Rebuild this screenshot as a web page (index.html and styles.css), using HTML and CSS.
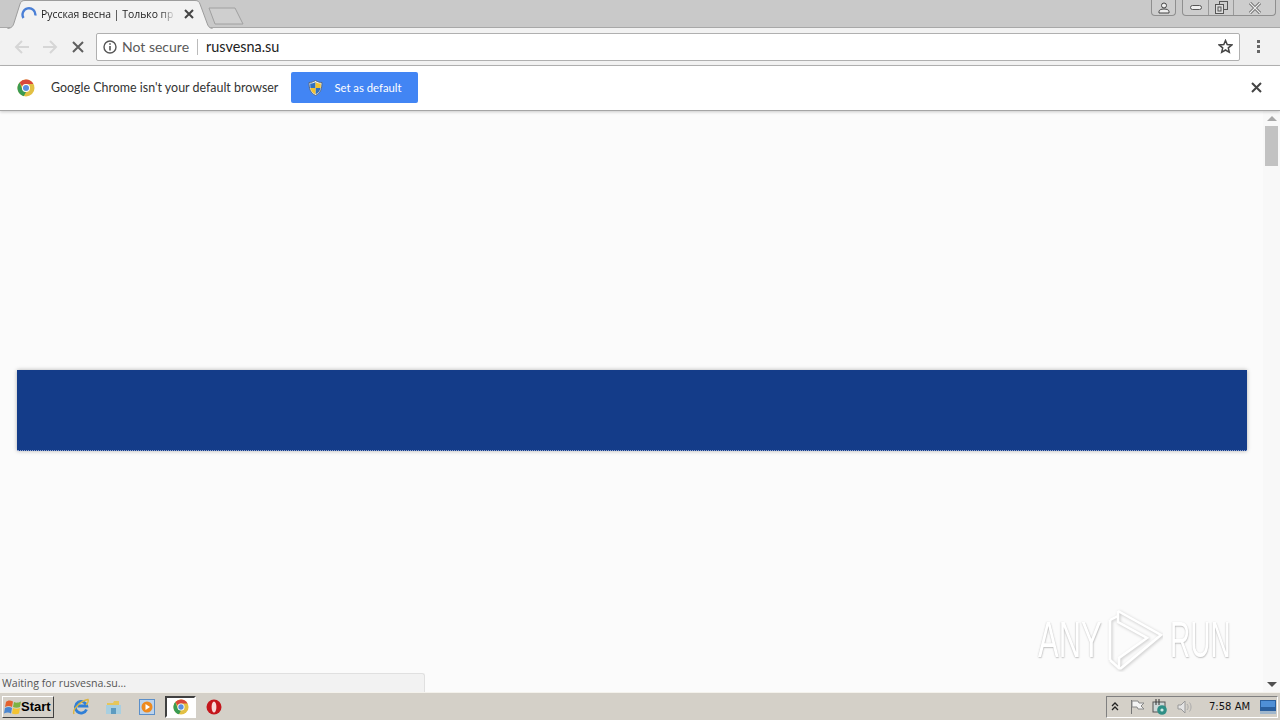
FILE: index.html
```html
<!DOCTYPE html>
<html lang="en">
<head>
  <meta charset="UTF-8">
  <title>Русская весна | Только правда</title>
  <link rel="stylesheet" href="styles.css">
</head>
<body>
  <!-- tab strip -->
  <div class="tab-strip">
    <div class="tab">
      <svg class="tab-shape" width="206" height="29" viewBox="0 0 206 29"><path d="M0.5 28.5 C5 28 6 26 7 23 L13 4 C14 1.5 15 0.5 18 0.5 H188 C191 0.5 192 1.5 193 4 L200 23 C201 26 202 28 205.5 28.5" fill="#f2f2f2" stroke="#9c9c9c"/></svg>
      <svg class="tab-spinner" width="16" height="16" viewBox="0 0 16 16"><path d="M2.5 12 A6.4 6.4 0 1 1 14.3 9.5" fill="none" stroke="#4a7fd6" stroke-width="2.4"/></svg>
      <span class="tab-title">Русская весна | Только пр</span>
      <svg class="tab-close" width="10" height="10" viewBox="0 0 10 10"><path d="M1 1 L9 9 M9 1 L1 9" stroke="#444" stroke-width="2"/></svg>
    </div>
    <svg class="new-tab" width="36" height="18" viewBox="0 0 36 18"><path d="M1 1 H27 L35 17 H7 Z" fill="#cfcfcf" stroke="#a0a0a0"/></svg>
    <div class="window-btns">
      <div class="win-group profile-btn">
        <svg width="12" height="12" viewBox="0 0 12 12"><circle cx="6" cy="3.5" r="2.5" fill="#eee" stroke="#444"/><path d="M1 11 V9.5 C1 8 3 7 6 7 C9 7 11 8 11 9.5 V11 Z" fill="#eee" stroke="#444"/></svg>
      </div>
      <div class="win-group">
        <div class="win-btn min-btn"><svg width="12" height="6" viewBox="0 0 12 6"><rect x="0.5" y="0.5" width="11" height="4" rx="2" fill="#eee" stroke="#555"/></svg></div>
        <div class="win-btn max-btn"><svg width="13" height="13" viewBox="0 0 13 13"><rect x="4.5" y="0.5" width="8" height="8" fill="none" stroke="#555"/><rect x="0.5" y="3.5" width="8" height="9" fill="#ddd" stroke="#555"/><rect x="3" y="6" width="3" height="4" fill="none" stroke="#555"/></svg></div>
        <div class="win-btn close-btn"><svg width="14" height="12" viewBox="0 0 14 12"><path d="M2 1 L12 11 M12 1 L2 11" stroke="#666" stroke-width="3"/><path d="M2 1 L12 11 M12 1 L2 11" stroke="#eee" stroke-width="1.2"/></svg></div>
      </div>
    </div>
  </div>

  <!-- toolbar -->
  <div class="toolbar">
    <svg class="nav-icon" width="16" height="14" viewBox="0 0 16 14"><path d="M15 7 H2 M8 1 L2 7 L8 13" fill="none" stroke="#d6d6d6" stroke-width="2"/></svg>
    <svg class="nav-icon" width="16" height="14" viewBox="0 0 16 14"><path d="M1 7 H14 M8 1 L14 7 L8 13" fill="none" stroke="#d6d6d6" stroke-width="2"/></svg>
    <svg class="nav-icon stop-icon" width="12" height="12" viewBox="0 0 12 12"><path d="M1 1 L11 11 M11 1 L1 11" stroke="#5f5f5f" stroke-width="2"/></svg>
    <div class="omnibox">
      <svg class="info-icon" width="14" height="14" viewBox="0 0 14 14"><circle cx="7" cy="7" r="6" fill="none" stroke="#555" stroke-width="1.4"/><path d="M7 6 V10.5 M7 3.2 V4.8" stroke="#555" stroke-width="1.6"/></svg>
      <span class="not-secure">Not secure</span>
      <span class="omni-sep"></span>
      <span class="url">rusvesna.su</span>
      <svg class="star-icon" width="15" height="15" viewBox="0 0 15 15"><path d="M7.5 1.5 L9.2 5.6 L13.7 6 L10.3 8.9 L11.3 13.3 L7.5 11 L3.7 13.3 L4.7 8.9 L1.3 6 L5.8 5.6 Z" fill="none" stroke="#444" stroke-width="1.5"/></svg>
    </div>
    <div class="menu-dots"><i></i><i></i><i></i></div>
  </div>

  <!-- default browser bar -->
  <div class="infobar">
    <svg class="chrome-logo" width="18" height="18" viewBox="0 0 18 18">
      <circle cx="9" cy="9" r="8.5" fill="#e2c044"/>
      <path d="M9 .5 A8.5 8.5 0 0 1 16.4 5 H9 A4 4 0 0 0 5.3 7.4 L2.6 3.4 A8.5 8.5 0 0 1 9 .5 Z" fill="#d9483b"/>
      <path d="M2.6 3.4 L5.4 10.8 A4 4 0 0 0 9 13 L6.7 17.2 A8.5 8.5 0 0 1 2.6 3.4 Z" fill="#3a9b52"/>
      <circle cx="9" cy="9" r="4" fill="#fff"/><circle cx="9" cy="9" r="3" fill="#5a8fe0"/>
    </svg>
    <span class="infobar-text">Google Chrome isn't your default browser</span>
    <div class="default-btn">
      <svg width="15" height="16" viewBox="0 0 15 16"><path d="M7.5 .5 C10 2 12 2.5 14 2.5 C14 9 12.5 13 7.5 15.5 C2.5 13 1 9 1 2.5 C3 2.5 5 2 7.5 .5 Z" fill="#e9eef5" stroke="#5a6a80"/><path d="M7.5 2 V8 H2.4 C2.3 6 2.2 5 2.2 3.6 C4 3.5 6 3 7.5 2 Z" fill="#2f6fc0"/><path d="M7.5 8 H12.6 C12 11 10.5 13 7.5 14.3 Z" fill="#2f6fc0"/><path d="M7.5 2 C9 3 11 3.5 12.8 3.6 C12.8 5 12.7 6.5 12.6 8 H7.5 Z" fill="#f2c230"/><path d="M2.4 8 H7.5 V14.3 C4.5 13 3 11 2.4 8 Z" fill="#f2c230"/></svg>
      <span>Set as default</span>
    </div>
    <svg class="infobar-close" width="11" height="11" viewBox="0 0 11 11"><path d="M1 1 L10 10 M10 1 L1 10" stroke="#444" stroke-width="2"/></svg>
  </div>

  <!-- page area -->
  <div class="viewport">
    <div class="page">
      <div class="blue-band"></div>
    </div>
    <div class="scrollbar">
      <div class="arrow-up"></div>
      <div class="thumb"></div>
      <div class="scroll-rest"></div>
      <div class="arrow-down"></div>
    </div>
    <div class="status-bubble">Waiting for rusvesna.su...</div>
    <div class="watermark">
      <span class="wm-any">ANY</span>
      <svg width="60" height="64" viewBox="0 0 60 64">
        <g fill="none" stroke="#fff" stroke-width="2.5" class="wm-logo">
          <path d="M15 3 L58 27 L17 61"/>
          <path d="M15 3 V14 L44 30 L16 50 V61"/>
          <path d="M7 12 V52"/>
          <path d="M7 52 L17 61"/>
          <path d="M7 12 L15 8"/>
        </g>
      </svg>
      <span class="wm-run">RUN</span>
    </div>
  </div>

  <!-- taskbar -->
  <div class="taskbar">
    <div class="start-btn">
      <svg width="17" height="16" viewBox="0 0 17 16"><path d="M2 3 C4 1 6 1 9 2.5 L8 8 C6 6.5 3.5 6.5 1 8 Z" fill="#e4622e"/><path d="M10 3 C12 4 14 4 17 2.5 L16 8 C14 9 11 9 9 8 Z" fill="#7cb342"/><path d="M1 9 C3.5 7.5 6 7.5 8 9 L7 14.5 C5 13 2.5 13 0 14.5 Z" fill="#4a86d0"/><path d="M9 9 C11 10 14 10 16 9 L15 14.5 C13 15.5 10 15.5 8 14.5 Z" fill="#f3c332"/></svg>
      <span>Start</span>
    </div>
    <div class="quick-launch">
      <div class="task-icon">
        <svg width="18" height="18" viewBox="0 0 18 18"><path d="M14.5 11.5 A5.8 5.8 0 1 1 14.8 8 H5.5" fill="none" stroke="#2f7fd6" stroke-width="2.8"/><path d="M2 16 C0 12 8 3 16 1.5 C17 4 15 6 14 7" fill="none" stroke="#dcb540" stroke-width="1.4"/></svg>
      </div>
      <div class="task-icon">
        <svg width="18" height="18" viewBox="0 0 18 18"><path d="M2 5 H8 L9 3 H14 V7 H2 Z" fill="#e6c65a"/><path d="M1 7 H16 V16 H1 Z" fill="#a8cfe0"/><path d="M6 10 H11 V16 H6 Z" fill="#5d9bc0"/></svg>
      </div>
      <div class="task-icon">
        <svg width="18" height="18" viewBox="0 0 18 18"><rect x="1.5" y="1.5" width="15" height="15" fill="#bcd3ec" stroke="#5b8fc9"/><circle cx="9" cy="9" r="5.5" fill="#ee8a1e"/><path d="M7.5 6 L12 9 L7.5 12 Z" fill="#fff"/></svg>
      </div>
      <div class="task-icon active">
        <svg width="16" height="16" viewBox="0 0 18 18">
          <circle cx="9" cy="9" r="8.5" fill="#e2c044"/>
          <path d="M9 .5 A8.5 8.5 0 0 1 16.4 5 H9 A4 4 0 0 0 5.3 7.4 L2.6 3.4 A8.5 8.5 0 0 1 9 .5 Z" fill="#d9483b"/>
          <path d="M2.6 3.4 L5.4 10.8 A4 4 0 0 0 9 13 L6.7 17.2 A8.5 8.5 0 0 1 2.6 3.4 Z" fill="#3a9b52"/>
          <circle cx="9" cy="9" r="4" fill="#fff"/><circle cx="9" cy="9" r="3" fill="#5a8fe0"/>
        </svg>
      </div>
      <div class="task-icon opera-icon">
        <svg width="16" height="16" viewBox="0 0 16 16"><circle cx="8" cy="8" r="7.5" fill="#c4161c"/><ellipse cx="8" cy="8" rx="2.4" ry="5.5" fill="#f8dada"/></svg>
      </div>
    </div>
    <div class="tray">
      <svg class="tray-arrows" width="8" height="9" viewBox="0 0 8 9"><path d="M1 4 L4 1 L7 4 M1 8 L4 5 L7 8" fill="none" stroke="#222" stroke-width="1.3"/></svg>
      <svg class="tray-flag" width="16" height="16" viewBox="0 0 16 16"><path d="M2.5 1 V15" stroke="#777"/><path d="M3 2 H9 L10 4 H15 L12 7 L15 10 H9 L8 8 H3 Z" fill="#f4f4f4" stroke="#888"/></svg>
      <svg class="tray-net" width="16" height="16" viewBox="0 0 16 16"><rect x="1" y="3" width="12" height="10" fill="#cfd8d8" stroke="#555"/><path d="M4 0 V6 M7 0 V6" stroke="#333"/><circle cx="10" cy="11" r="4.8" fill="#2f8f86"/><circle cx="10" cy="11" r="1.6" fill="#cdebe6"/></svg>
      <svg class="tray-sound" width="16" height="14" viewBox="0 0 16 14"><path d="M1 5 H4 L8 1 V13 L4 9 H1 Z" fill="#e4e4e4" stroke="#999"/><path d="M10 4 C11.5 6 11.5 8 10 10 M12.5 2.5 C14.5 5 14.5 9 12.5 11.5" fill="none" stroke="#aaa"/></svg>
      <span class="clock">7:58 AM</span>
      <svg class="show-desktop" width="16" height="14" viewBox="0 0 16 14"><rect width="16" height="11" fill="#2a5f9e"/><rect x="1" y="1" width="14" height="6" fill="#4f8fd6"/><rect y="11" width="16" height="3" fill="#9fb6cc"/></svg>
    </div>
  </div>
</body>
</html>
```

FILE: styles.css
```css
* {
  box-sizing: border-box;
  margin: 0;
  padding: 0;
}
html, body {
  height: 100%;
  overflow: hidden;
}
body {
  display: flex;
  flex-direction: column;
  font-family: Lato, "Open Sans", sans-serif;
  background-color: #fbfbfb;
  color: #333;
}

/* tab strip */
.tab-strip {
  height: 28px;
  flex-shrink: 0;
  display: flex;
  align-items: flex-start;
  padding-left: 7px;
  background-color: #c9c9c9;
  border-bottom: 1px solid #a8a8a8;
  position: relative;
}
.tab {
  width: 206px;
  height: 29px;
  position: relative;
  z-index: 1;
  display: flex;
  align-items: center;
  padding: 0 18px 2px 14px;
  flex-shrink: 0;
}
.tab-shape {
  position: absolute;
  left: 0;
  top: 0;
}
.tab-spinner {
  position: relative;
  flex-shrink: 0;
}
.tab-title {
  position: relative;
  width: 135px;
  margin-left: 4px;
  font-family: "Open Sans", sans-serif;
  font-size: 10.4px;
  white-space: nowrap;
  color: #222;
  -webkit-mask-image: linear-gradient(to right, #000 88%, transparent);
  mask-image: linear-gradient(to right, #000 88%, transparent);
}
.tab-close {
  position: relative;
  margin-left: 8px;
  flex-shrink: 0;
}
.new-tab {
  margin-top: 7px;
  margin-left: -5px;
  flex-shrink: 0;
}
.window-btns {
  margin-left: auto;
  display: flex;
  gap: 6px;
  padding-right: 4px;
}
.win-group {
  height: 16px;
  display: flex;
  border: 1px solid #8f8f8f;
  border-top: none;
  border-radius: 0 0 4px 4px;
  background-color: #cdcdcd;
}
.profile-btn {
  width: 25px;
  align-items: center;
  justify-content: center;
}
.win-btn {
  display: flex;
  align-items: center;
  justify-content: center;
  border-left: 1px solid #9a9a9a;
}
.win-btn:first-child {
  border-left: none;
}
.min-btn, .max-btn {
  width: 25px;
}
.close-btn {
  width: 42px;
}

/* toolbar */
.toolbar {
  height: 38px;
  flex-shrink: 0;
  display: flex;
  align-items: center;
  padding: 0 4px 0 14px;
  background-color: #f2f2f2;
  border-bottom: 1px solid #b5b5b5;
}
.nav-icon {
  margin-right: 12px;
  flex-shrink: 0;
}
.stop-icon {
  margin-left: 2px;
  margin-right: 12px;
}
.omnibox {
  flex: 1;
  height: 28px;
  display: flex;
  align-items: center;
  padding: 0 6px;
  background-color: #fff;
  border: 1px solid #b0b0b0;
  border-radius: 2px;
  font-size: 14px;
}
.info-icon {
  flex-shrink: 0;
}
.not-secure {
  margin-left: 5px;
  color: #5a5a5a;
}
.omni-sep {
  width: 1px;
  height: 16px;
  margin: 0 8px;
  background-color: #bbb;
}
.url {
  color: #222;
  font-size: 14.4px;
}
.star-icon {
  margin-left: auto;
}
.menu-dots {
  width: 36px;
  display: flex;
  flex-direction: column;
  align-items: center;
  gap: 2px;
}
.menu-dots i {
  width: 3px;
  height: 3px;
  background-color: #666;
}

/* infobar */
.infobar {
  height: 45px;
  flex-shrink: 0;
  display: flex;
  align-items: center;
  padding: 0 18px 1px 17px;
  background-color: #fff;
  border-bottom: 1px solid #a5a5a5;
  box-shadow: 0 1px 3px rgba(0, 0, 0, 0.2);
  position: relative;
  z-index: 2;
}
.infobar-text {
  margin-left: 16px;
  margin-bottom: 1px;
  font-size: 12.45px;
  color: #333;
  white-space: nowrap;
}
.default-btn {
  width: 127px;
  height: 31px;
  margin-left: 13px;
  display: flex;
  align-items: center;
  gap: 11px;
  padding-left: 17px;
  background-color: #4285f4;
  border-radius: 2px;
  color: #fff;
  font-size: 11.3px;
}
.infobar-close {
  margin-left: auto;
}

/* page area */
.viewport {
  flex: 1;
  display: flex;
  position: relative;
  min-height: 0;
}
.page {
  flex: 1;
  padding: 259px 16px 0 17px;
}
.blue-band {
  height: 81px;
  background-color: #143c89;
  border-bottom: 1px dotted #8fa3cf;
  box-shadow: 0 0 4px rgba(0, 0, 0, 0.3);
}
.scrollbar {
  width: 17px;
  display: flex;
  flex-direction: column;
  align-items: center;
  background-color: #f8f8f8;
  padding: 5px 0 5px;
}
.arrow-up, .arrow-down {
  width: 0;
  height: 0;
  border-left: 5px solid transparent;
  border-right: 5px solid transparent;
}
.arrow-up {
  border-bottom: 5px solid #a8a8a8;
}
.arrow-down {
  border-top: 5px solid #505050;
}
.thumb {
  width: 13px;
  height: 40px;
  margin-top: 5px;
  background-color: #c2c2c2;
}
.scroll-rest {
  flex: 1;
}
.status-bubble {
  position: absolute;
  left: 0;
  bottom: 0;
  width: 425px;
  height: 19px;
  padding: 2px 0 0 2px;
  background-color: #f2f2f2;
  border: 1px solid #e0e0e0;
  border-width: 1px 1px 0 0;
  border-radius: 0 3px 0 0;
  font-family: "Open Sans", sans-serif;
  font-size: 10.6px;
  color: #555;
}
.watermark {
  position: absolute;
  right: 48px;
  bottom: 20px;
  display: flex;
  align-items: center;
  font-family: "Liberation Sans", sans-serif;
  font-size: 50px;
  line-height: 64px;
  color: #fff;
  text-shadow: 1px 1px 2px rgba(0, 0, 0, 0.22), -1px 0 2px rgba(0, 0, 0, 0.12);
}
.watermark span {
  display: block;
  width: 62px;
  transform-origin: left center;
}
.wm-any {
  transform: scaleX(0.62);
  margin-right: 3px;
}
.wm-run {
  transform: scaleX(0.56);
  margin-left: 7px;
}
.wm-logo {
  filter: drop-shadow(1px 1px 1.5px rgba(0, 0, 0, 0.22));
}

/* taskbar */
.taskbar {
  height: 28px;
  flex-shrink: 0;
  display: flex;
  align-items: center;
  padding-left: 2px;
  background-color: #d4d0c8;
  border-top: 1px solid #f4f2ec;
  font-family: "DejaVu Sans", sans-serif;
}
.start-btn {
  width: 52px;
  height: 22px;
  display: flex;
  align-items: center;
  padding-left: 1px;
  border: 1px solid;
  border-color: #fff #404040 #404040 #fff;
  font-family: "Liberation Sans", sans-serif;
  font-weight: bold;
  font-size: 13px;
  color: #000;
}
.quick-launch {
  display: flex;
  align-items: center;
  margin-left: 10px;
}
.task-icon {
  width: 33px;
  height: 22px;
  display: flex;
  align-items: center;
  justify-content: center;
}
.task-icon.active {
  width: 31px;
  margin-left: 2px;
  background-color: #fff;
  border: 2px solid;
  border-color: #404040 #fff #fff #404040;
}
.opera-icon {
  margin-left: 1px;
}
.tray {
  margin-left: auto;
  margin-right: 2px;
  width: 172px;
  height: 22px;
  display: flex;
  align-items: center;
  padding-left: 4px;
  border: 1px solid;
  border-color: #808080 #fff #fff #808080;
}
.tray-flag {
  margin-left: 10px;
}
.tray-net {
  margin-left: 7px;
}
.tray-sound {
  margin-left: 9px;
}
.clock {
  margin-left: 16px;
  font-size: 10px;
  color: #111;
  white-space: nowrap;
}
.show-desktop {
  margin-left: auto;
  margin-right: 1px;
}
```
